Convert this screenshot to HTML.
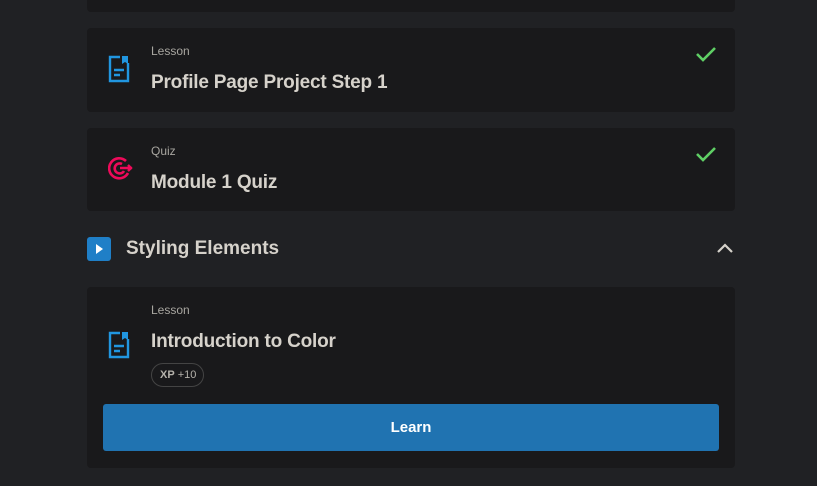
<html><head><style>
body{margin:0;width:817px;height:486px;background:#202124;font-family:"Liberation Sans",sans-serif;position:relative;overflow:hidden}
.card{position:absolute;left:87px;width:648px;background:#19191b;border-radius:4px}
.lbl{position:absolute;left:64px;font-size:12px;color:#a8a6a0}
.ttl{position:absolute;left:64px;font-size:19px;font-weight:bold;color:#d6d2cb;letter-spacing:-0.2px}
.ico{position:absolute;left:21px}
.chk{position:absolute;right:18px;top:18px}
</style></head><body>
<div class="card" style="top:-10px;height:22px"></div>
<div class="card" style="top:28px;height:84px">
<div class="lbl" style="top:16px">Lesson</div>
<div class="ttl" style="top:44px">Profile Page Project Step 1</div>
<svg class="ico" style="top:27px" width="22" height="28" viewBox="0 0 22 28"><path d="M12 2H2v24h18V8" fill="none" stroke="#2196e0" stroke-width="2.4"/><path d="M14 1h6v8l-3-2-3 2z" fill="#2196e0"/><path d="M6 15h10M6 20h6" stroke="#2196e0" stroke-width="2.4"/></svg>
<svg class="chk" width="22" height="16" viewBox="0 0 22 16"><path d="M2 8l6 6L20 2" fill="none" stroke="#5fcf65" stroke-width="2.6"/></svg>
</div>
<div class="card" style="top:128px;height:83px">
<div class="lbl" style="top:16px">Quiz</div>
<div class="ttl" style="top:44px">Module 1 Quiz</div>
<svg class="ico" style="top:28px" width="26" height="26" viewBox="0 0 26 26"><path d="M18 5A10 10 0 1 0 20 17" fill="none" stroke="#ee0a5a" stroke-width="2.6"/><path d="M14 8A5 5 0 1 0 16 15" fill="none" stroke="#ee0a5a" stroke-width="2.6"/><path d="M12 12h12M20 9l3 3-3 3" fill="none" stroke="#ee0a5a" stroke-width="2.4"/></svg>
<svg class="chk" width="22" height="16" viewBox="0 0 22 16"><path d="M2 8l6 6L20 2" fill="none" stroke="#5fcf65" stroke-width="2.6"/></svg>
</div>
<div style="position:absolute;left:87px;top:237px;width:24px;height:24px;background:#1f7fc7;border-radius:3px"><svg width="24" height="24"><path d="M9 7l7 5-7 5z" fill="#fff"/></svg></div>
<div style="position:absolute;left:126px;top:238px;font-size:19px;font-weight:bold;color:#d6d2cb">Styling Elements</div>
<svg style="position:absolute;left:716px;top:242px" width="18" height="12"><path d="M2 10l7-7 7 7" fill="none" stroke="#d6d2cb" stroke-width="2.2"/></svg>
<div class="card" style="top:287px;height:181px">
<div class="lbl" style="top:16px">Lesson</div>
<div class="ttl" style="top:44px">Introduction to Color</div>
<svg class="ico" style="top:44px" width="22" height="28" viewBox="0 0 22 28"><path d="M12 2H2v24h18V8" fill="none" stroke="#2196e0" stroke-width="2.4"/><path d="M14 1h6v8l-3-2-3 2z" fill="#2196e0"/><path d="M6 15h10M6 20h6" stroke="#2196e0" stroke-width="2.4"/></svg>
<div style="position:absolute;left:64px;top:76px;width:53px;height:24px;border:1px solid #444;border-radius:12px;box-sizing:border-box;font-size:11px;color:#b5b2ab;line-height:22px;padding-left:8px"><b>XP</b> +10</div>
<div style="position:absolute;left:16px;top:117px;width:616px;height:47px;background:#2073b1;border-radius:3px;color:#fff;font-weight:bold;font-size:15px;text-align:center;line-height:47px">Learn</div>
</div>
</body></html>
